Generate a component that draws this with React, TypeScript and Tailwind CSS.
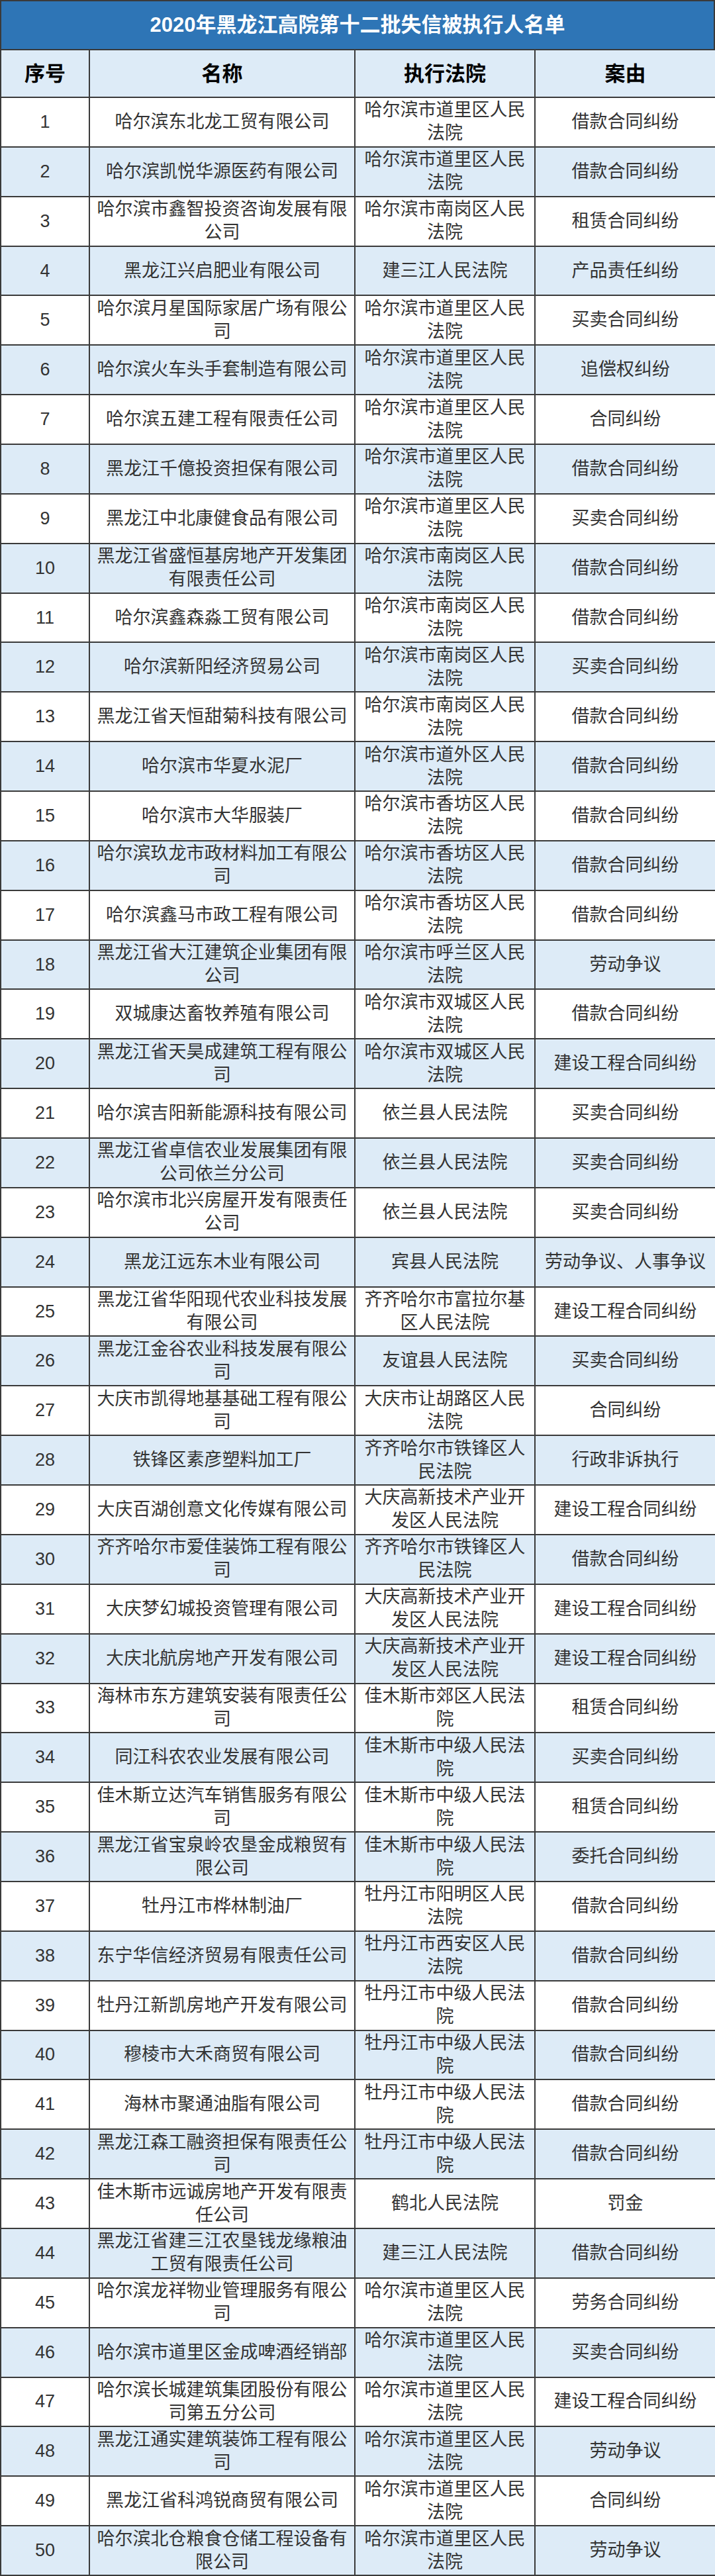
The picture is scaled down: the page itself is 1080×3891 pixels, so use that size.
import React from 'react';

const rows: [string, string, string][] = [
   ['哈尔滨东北龙工贸有限公司', '哈尔滨市道里区人民法院', '借款合同纠纷'],
   ['哈尔滨凯悦华源医药有限公司', '哈尔滨市道里区人民法院', '借款合同纠纷'],
   ['哈尔滨市鑫智投资咨询发展有限公司', '哈尔滨市南岗区人民法院', '租赁合同纠纷'],
   ['黑龙江兴启肥业有限公司', '建三江人民法院', '产品责任纠纷'],
   ['哈尔滨月星国际家居广场有限公司', '哈尔滨市道里区人民法院', '买卖合同纠纷'],
   ['哈尔滨火车头手套制造有限公司', '哈尔滨市道里区人民法院', '追偿权纠纷'],
   ['哈尔滨五建工程有限责任公司', '哈尔滨市道里区人民法院', '合同纠纷'],
   ['黑龙江千億投资担保有限公司', '哈尔滨市道里区人民法院', '借款合同纠纷'],
   ['黑龙江中北康健食品有限公司', '哈尔滨市道里区人民法院', '买卖合同纠纷'],
   ['黑龙江省盛恒基房地产开发集团有限责任公司', '哈尔滨市南岗区人民法院', '借款合同纠纷'],
   ['哈尔滨鑫森淼工贸有限公司', '哈尔滨市南岗区人民法院', '借款合同纠纷'],
   ['哈尔滨新阳经济贸易公司', '哈尔滨市南岗区人民法院', '买卖合同纠纷'],
   ['黑龙江省天恒甜菊科技有限公司', '哈尔滨市南岗区人民法院', '借款合同纠纷'],
   ['哈尔滨市华夏水泥厂', '哈尔滨市道外区人民法院', '借款合同纠纷'],
   ['哈尔滨市大华服装厂', '哈尔滨市香坊区人民法院', '借款合同纠纷'],
   ['哈尔滨玖龙市政材料加工有限公司', '哈尔滨市香坊区人民法院', '借款合同纠纷'],
   ['哈尔滨鑫马市政工程有限公司', '哈尔滨市香坊区人民法院', '借款合同纠纷'],
   ['黑龙江省大江建筑企业集团有限公司', '哈尔滨市呼兰区人民法院', '劳动争议'],
   ['双城康达畜牧养殖有限公司', '哈尔滨市双城区人民法院', '借款合同纠纷'],
   ['黑龙江省天昊成建筑工程有限公司', '哈尔滨市双城区人民法院', '建设工程合同纠纷'],
   ['哈尔滨吉阳新能源科技有限公司', '依兰县人民法院', '买卖合同纠纷'],
   ['黑龙江省卓信农业发展集团有限公司依兰分公司', '依兰县人民法院', '买卖合同纠纷'],
   ['哈尔滨市北兴房屋开发有限责任公司', '依兰县人民法院', '买卖合同纠纷'],
   ['黑龙江远东木业有限公司', '宾县人民法院', '劳动争议、人事争议'],
   ['黑龙江省华阳现代农业科技发展有限公司', '齐齐哈尔市富拉尔基区人民法院', '建设工程合同纠纷'],
   ['黑龙江金谷农业科技发展有限公司', '友谊县人民法院', '买卖合同纠纷'],
   ['大庆市凯得地基基础工程有限公司', '大庆市让胡路区人民法院', '合同纠纷'],
   ['铁锋区素彦塑料加工厂', '齐齐哈尔市铁锋区人民法院', '行政非诉执行'],
   ['大庆百湖创意文化传媒有限公司', '大庆高新技术产业开发区人民法院', '建设工程合同纠纷'],
   ['齐齐哈尔市爱佳装饰工程有限公司', '齐齐哈尔市铁锋区人民法院', '借款合同纠纷'],
   ['大庆梦幻城投资管理有限公司', '大庆高新技术产业开发区人民法院', '建设工程合同纠纷'],
   ['大庆北航房地产开发有限公司', '大庆高新技术产业开发区人民法院', '建设工程合同纠纷'],
   ['海林市东方建筑安装有限责任公司', '佳木斯市郊区人民法院', '租赁合同纠纷'],
   ['同江科农农业发展有限公司', '佳木斯市中级人民法院', '买卖合同纠纷'],
   ['佳木斯立达汽车销售服务有限公司', '佳木斯市中级人民法院', '租赁合同纠纷'],
   ['黑龙江省宝泉岭农垦金成粮贸有限公司', '佳木斯市中级人民法院', '委托合同纠纷'],
   ['牡丹江市桦林制油厂', '牡丹江市阳明区人民法院', '借款合同纠纷'],
   ['东宁华信经济贸易有限责任公司', '牡丹江市西安区人民法院', '借款合同纠纷'],
   ['牡丹江新凯房地产开发有限公司', '牡丹江市中级人民法院', '借款合同纠纷'],
   ['穆棱市大禾商贸有限公司', '牡丹江市中级人民法院', '借款合同纠纷'],
   ['海林市聚通油脂有限公司', '牡丹江市中级人民法院', '借款合同纠纷'],
   ['黑龙江森工融资担保有限责任公司', '牡丹江市中级人民法院', '借款合同纠纷'],
   ['佳木斯市远诚房地产开发有限责任公司', '鹤北人民法院', '罚金'],
   ['黑龙江省建三江农垦钱龙缘粮油工贸有限责任公司', '建三江人民法院', '借款合同纠纷'],
   ['哈尔滨龙祥物业管理服务有限公司', '哈尔滨市道里区人民法院', '劳务合同纠纷'],
   ['哈尔滨市道里区金成啤酒经销部', '哈尔滨市道里区人民法院', '买卖合同纠纷'],
   ['哈尔滨长城建筑集团股份有限公司第五分公司', '哈尔滨市道里区人民法院', '建设工程合同纠纷'],
   ['黑龙江通实建筑装饰工程有限公司', '哈尔滨市道里区人民法院', '劳动争议'],
   ['黑龙江省科鸿锐商贸有限公司', '哈尔滨市道里区人民法院', '合同纠纷'],
   ['哈尔滨北仓粮食仓储工程设备有限公司', '哈尔滨市道里区人民法院', '劳动争议'],
];

const cell =
   'flex items-center justify-center text-center px-1 border-r-2 border-b-2 border-[#3a3a3a] leading-[35px]';

export default function App() {
   return (
      <div className="w-[1080px] bg-white font-['Liberation_Sans','Noto_Sans_CJK_SC',sans-serif]">
         <div className="h-[76px] flex items-center justify-center bg-[#2e75b6] border-2 border-[#3a3a3a] text-white font-bold text-[31px]">
            2020年黑龙江高院第十二批失信被执行人名单
         </div>
         <div className="grid grid-cols-[134px_401px_272px_273px] border-l-2 border-[#3a3a3a]">
            <div className={`${cell} h-[72px] bg-[#ddebf7] font-bold text-[31px] text-black`}>序号</div>
            <div className={`${cell} h-[72px] bg-[#ddebf7] font-bold text-[31px] text-black`}>名称</div>
            <div className={`${cell} h-[72px] bg-[#ddebf7] font-bold text-[31px] text-black`}>执行法院</div>
            <div className={`${cell} h-[72px] bg-[#ddebf7] font-bold text-[31px] text-black`}>案由</div>
            {rows.map((row, index) => {
               const bg = index % 2 === 1 ? 'bg-[#ddebf7]' : 'bg-white';
               return (
                  <React.Fragment key={index}>
                     <div className={`${cell} ${bg} h-[74.86px] text-[27px] text-[#333]`}>{index + 1}</div>
                     <div className={`${cell} ${bg} h-[74.86px] text-[27px] text-[#333]`}>{row[0]}</div>
                     <div className={`${cell} ${bg} h-[74.86px] text-[27px] text-[#333]`}>{row[1]}</div>
                     <div className={`${cell} ${bg} h-[74.86px] text-[27px] text-[#333]`}>{row[2]}</div>
                  </React.Fragment>
               );
            })}
         </div>
      </div>
   );
}
